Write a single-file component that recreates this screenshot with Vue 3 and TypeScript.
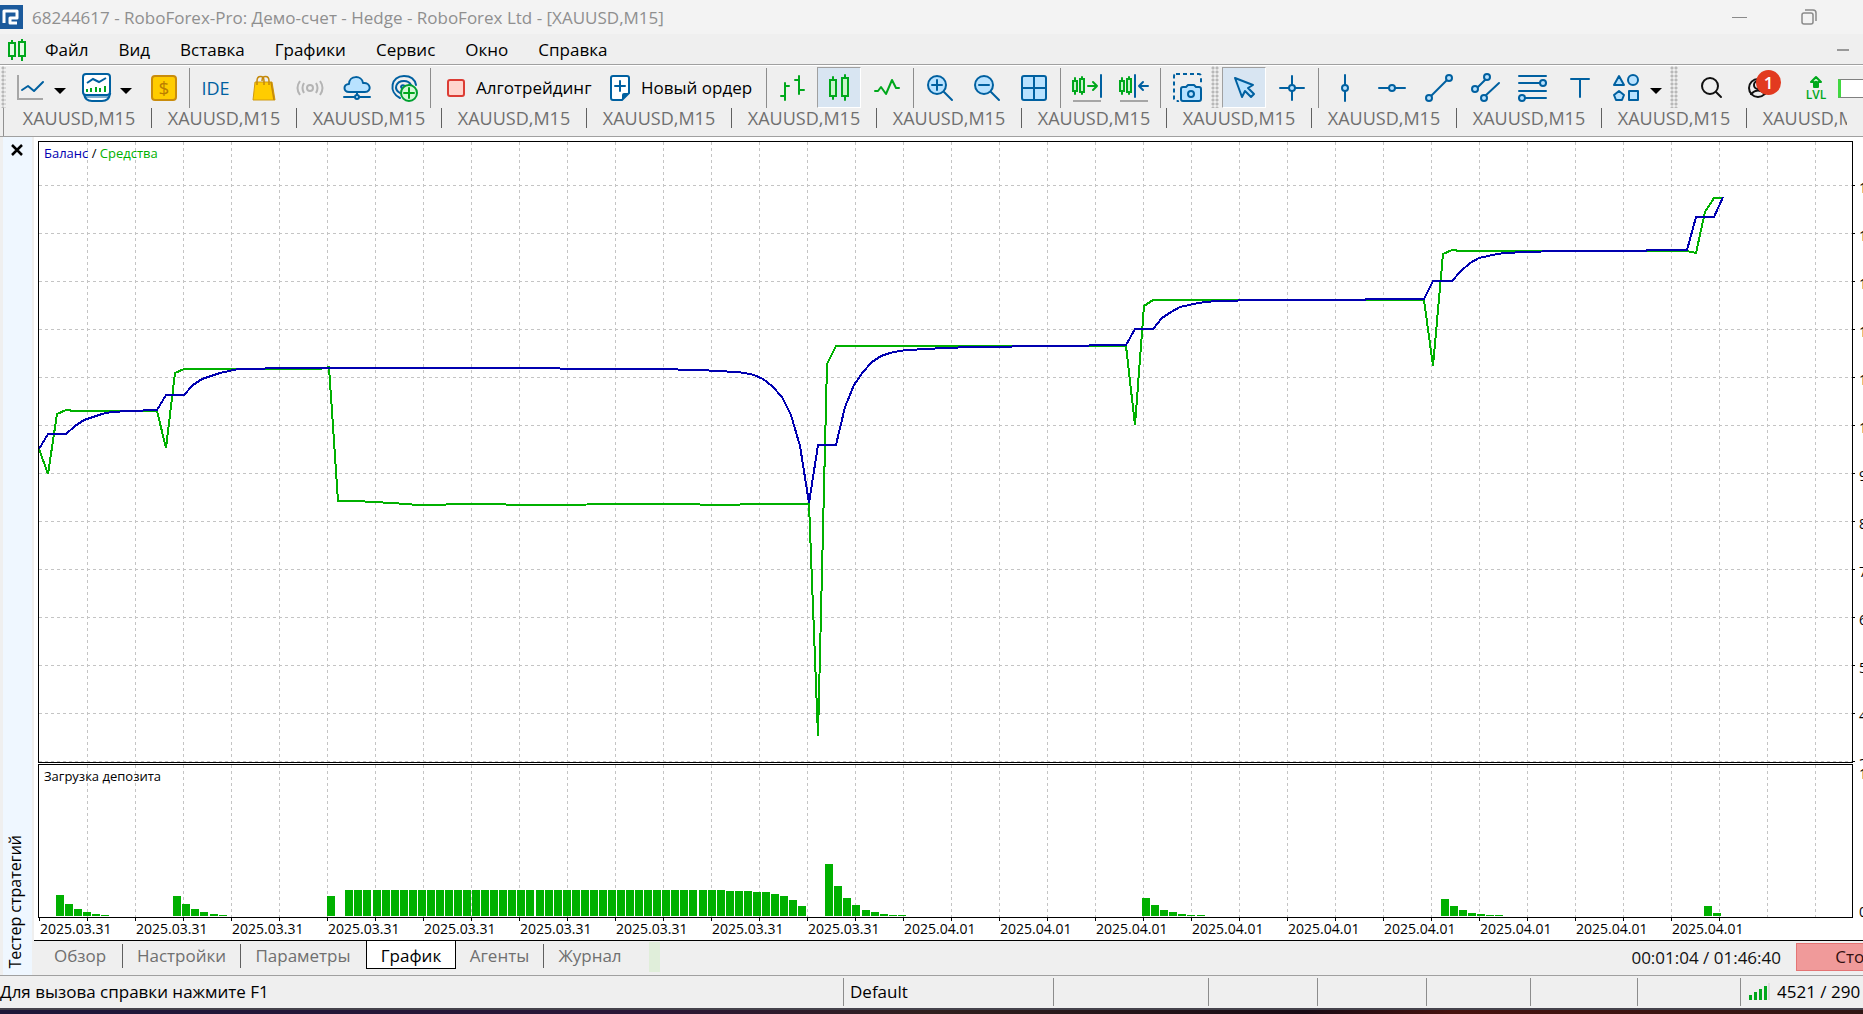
<script setup lang="ts">
type Point = [number, number]

interface Tool {
  kind: 'icon' | 'caret' | 'sep' | 'grip' | 'text'
  icon?: string
  label?: string
  active?: boolean
}

const B = 'fill="none" stroke="#0060a0" stroke-width="2" stroke-linecap="round" stroke-linejoin="round"'
const BF = 'fill="#b8e2ff" stroke="#0060a0" stroke-width="2" stroke-linejoin="round"'
const G = 'fill="none" stroke="#00a81c" stroke-width="2" stroke-linecap="round" stroke-linejoin="round"'
const GF = 'fill="#c8f5cc" stroke="#00a81c" stroke-width="2"'
const K = 'fill="none" stroke="#111" stroke-width="2" stroke-linecap="round"'

const icons: Record<string, string> = {
  line: `<path d="M3 3V27H28" fill="none" stroke="#a6a6a6" stroke-width="2"/><path d="M7 18L13 14L19 19L28 10" ${B}/>`,
  indicators: `<path d="M3 22C4 28 8 29 11 29H21C24 29 28 28 29 22Z" fill="#fff" stroke="#0060a0" stroke-width="2"/><path d="M4 25H28" stroke="#0060a0" stroke-width="1"/><rect x="2" y="2" width="27" height="21" rx="3" fill="#fff" stroke="#0060a0" stroke-width="2"/><path d="M6 11L12 7L18 10L25 6" fill="none" stroke="#0060a0" stroke-width="2"/><path d="M6 17V20M10 16V20M15 15V20M19 16V20M24 14V20" stroke="#00a81c" stroke-width="2"/>`,
  dollar: `<rect x="5" y="4" width="24" height="24" rx="3" fill="#ffcc00" stroke="#c98c0c" stroke-width="2"/><text x="17" y="23" text-anchor="middle" font-size="19" fill="#b97d00">$</text>`,
  bag: `<path d="M8 10H25L28 28H6Z" fill="#ffcc00" stroke="#d09a10" stroke-width="1"/><path d="M10 13V9C10 3 17 3 17 9V13M15 9C15 3 22 3 22 9V13M24 10L27 28" fill="none" stroke="#c4880a" stroke-width="1.5"/>`,
  signal: `<circle cx="16" cy="16" r="3" fill="none" stroke="#b4b4b4" stroke-width="2"/><path d="M10 11Q7 16 10 21M22 11Q25 16 22 21M6 9Q1 16 6 23M26 9Q31 16 26 23" fill="none" stroke="#b4b4b4" stroke-width="2"/>`,
  cloud: `<path d="M8 20C2 20 2 12 8 12C8 3 21 3 22 11C30 10 31 20 24 20Z" ${BF}/><path d="M16 20V23M3 25H13M19 25H29" ${B}/><circle cx="16" cy="25" r="2" ${BF}/>`,
  vps: `<path d="M12 26C0 20 3 4 16 4C23 4 27 8 28 13M12 21C5 17 8 9 16 9C20 9 22 11 23 13M15 17C11 15 14 12 17 14" ${B}/><circle cx="21" cy="21" r="8" fill="#d5f8d8" stroke="#00a030" stroke-width="2"/><path d="M16 21H26M21 16V26" ${G}/>`,
  algo: `<rect x="8" y="8" width="16" height="16" rx="2" fill="#ffd5ce" stroke="#dc3c34" stroke-width="2"/>`,
  order: `<path d="M9 4H23Q25 4 25 6V21L18 28H9Q7 28 7 26V6Q7 4 9 4Z" fill="#fff" stroke="#0060a0" stroke-width="2"/><path d="M25 21H20Q18 21 18 23V28Z" fill="#0060a0"/><path d="M11 14H21M16 9V19" ${B}/>`,
  bars: `<path d="M4 24H8M8 11V28M8 14H12M18 8H22M22 4V22M22 18H27" ${G}/>`,
  candles: `<path d="M10 5V27M22 3V28" ${G}/><rect x="7" y="8" width="6" height="16" ${GF}/><rect x="19" y="6" width="6" height="18" ${GF}/>`,
  zigzag: `<path d="M4 19H7L10 15L15 22L21 8L25 16H28" ${G}/>`,
  zoomin: `<circle cx="13" cy="13" r="9" ${BF}/><path d="M20 20L28 28M8 13H18M13 8V18" ${B}/>`,
  zoomout: `<circle cx="13" cy="13" r="9" ${BF}/><path d="M20 20L28 28M8 13H18" ${B}/>`,
  tile: `<rect x="4" y="4" width="24" height="24" rx="2" ${BF}/><path d="M16 4V28M4 16H28" ${B}/>`,
  shift: `<path d="M2 29H30" stroke="#a6a6a6" stroke-width="2"/><path d="M4 6V22M11 5V22" ${G}/><rect x="2" y="9" width="4" height="10" ${GF}/><rect x="9" y="7" width="4" height="13" ${GF}/><path d="M17 14H26M22 10L26 14L22 18" ${G}/><path d="M30 3V25" ${B}/>`,
  scroll: `<path d="M2 29H30" stroke="#a6a6a6" stroke-width="2"/><path d="M4 6V22M11 5V22" ${G}/><rect x="2" y="9" width="4" height="10" ${GF}/><rect x="9" y="7" width="4" height="13" ${GF}/><path d="M17 3V25M30 14H21M25 10L21 14L25 18" ${B}/>`,
  camera: `<rect x="3" y="2" width="27" height="27" rx="2" fill="none" stroke="#0060a0" stroke-width="2" stroke-dasharray="4 3"/><path d="M12 15H15L17 13H23L25 15H28Q30 15 30 17V27Q30 29 28 29H12Q10 29 10 27V17Q10 15 12 15Z" fill="#b8e2ff" stroke="#efefef" stroke-width="5"/><path d="M12 15H15L17 13H23L25 15H28Q30 15 30 17V27Q30 29 28 29H12Q10 29 10 27V17Q10 15 12 15Z" ${BF}/><circle cx="20" cy="22" r="3" ${BF}/>`,
  cursor: `<path d="M7 6L25 13L20 16L26 22L23 25L17 19L14 25Z" ${BF}/>`,
  cross: `<path d="M4 16H28M16 4V28" ${B}/><circle cx="16" cy="16" r="3" ${BF}/>`,
  vline: `<path d="M16 3V29" ${B}/><circle cx="16" cy="16" r="3" ${BF}/>`,
  hline: `<path d="M3 16H29" ${B}/><circle cx="16" cy="16" r="3" ${BF}/>`,
  trend: `<path d="M6 26L26 6" ${B}/><circle cx="26" cy="6" r="3" ${BF}/><circle cx="6" cy="26" r="3" ${BF}/>`,
  channel: `<path d="M6 17L17 6M14 25L29 11" ${B}/><circle cx="17" cy="5" r="3" ${BF}/><circle cx="5" cy="17" r="3" ${BF}/><circle cx="14" cy="26" r="3" ${BF}/>`,
  fibo: `<path d="M2 4H29M2 11H29M2 19H29M2 26H29" ${B}/><circle cx="26" cy="11" r="3" ${BF}/><circle cx="5" cy="26" r="3" ${BF}/>`,
  text: `<path d="M7 7H25M16 7V25" ${B}/>`,
  shapes: `<path d="M8 4L13 13H3Z" ${BF}/><circle cx="22" cy="8" r="5" ${BF}/><path d="M8 19L13 23L11 28H5L3 23Z" ${BF}/><rect x="18" y="19" width="9" height="9" ${BF}/>`,
  search: `<circle cx="16" cy="14" r="8" ${K}/><path d="M22 20L27 25" ${K}/>`,
  account: `<circle cx="14" cy="16" r="9" ${K}/><circle cx="14" cy="13" r="4" ${K}/><path d="M7 22Q14 15 21 22" ${K}/>`,
  level: `<path d="M16 16V9M16 5L11 10H14V15H18V10H21Z" fill="#c8f5cc" stroke="#00a81c" stroke-width="2" stroke-linejoin="round"/><text x="16" y="27" text-anchor="middle" font-size="12" font-weight="600" fill="#00a81c">LVL</text>`,
}

const icon = (name: string, label: string, active = false): Tool => ({ kind: 'icon', icon: name, label, active })
const sep: Tool = { kind: 'sep' }
const grip: Tool = { kind: 'grip' }
const caret: Tool = { kind: 'caret' }

const tools: Tool[] = [
  icon('line', 'Тип графика'), caret,
  icon('indicators', 'Индикаторы'), caret,
  icon('dollar', 'Символы'), sep,
  { kind: 'text', label: 'IDE' },
  icon('bag', 'Маркет'), icon('signal', 'Сигналы'), icon('cloud', 'Облако'), icon('vps', 'VPS'), sep,
]

const tools2: Tool[] = [
  sep, icon('bars', 'Бары'), icon('candles', 'Свечи', true), icon('zigzag', 'Линия'), sep,
  icon('zoomin', 'Увеличить'), icon('zoomout', 'Уменьшить'), icon('tile', 'Плитка'), sep,
  icon('shift', 'Автопрокрутка'), icon('scroll', 'Сдвиг'), sep,
  icon('camera', 'Снимок'), grip,
  icon('cursor', 'Курсор', true), icon('cross', 'Перекрестие'), sep,
  icon('vline', 'Вертикальная линия'), icon('hline', 'Горизонтальная линия'), icon('trend', 'Трендовая линия'),
  icon('channel', 'Канал'), icon('fibo', 'Фибоначчи'), icon('text', 'Текст'), icon('shapes', 'Фигуры'), caret, grip,
]

const menu = ['Файл', 'Вид', 'Вставка', 'Графики', 'Сервис', 'Окно', 'Справка']
const chartTabs = Array.from({ length: 13 }, () => 'XAUUSD,M15')

const STEP = 9.055
const GRID = 48

const balance: Point[] = [
  [0, 307], [1, 292], [3, 292], [4, 284], [5, 278], [6, 275], [7, 272], [8, 270], [10, 269], [13, 268],
  [14, 253], [16, 253], [17, 243], [18, 237], [19, 234], [20, 231], [21, 229], [22, 227], [24, 227], [26, 226],
  [55, 226], [60, 227], [68, 227], [73, 228], [75, 229], [77, 230], [78, 231], [79, 233], [80, 237], [81, 244],
  [82, 255], [83, 273], [84, 304], [85, 361], [86, 303], [88, 303], [89, 265], [90, 243], [91, 230], [92, 220],
  [93, 214], [94, 211], [95, 209], [96, 208], [98, 207], [100, 206], [103, 205], [112, 204], [120, 203],
  [121, 187], [123, 187], [124, 176], [125, 170], [126, 165], [127, 163], [128, 161], [129, 160], [130, 159],
  [135, 158], [146, 158], [147, 157], [153, 157], [154, 139], [156, 139], [157, 129], [158, 121], [159, 116], [160, 114],
  [161, 112], [162, 111], [164, 110], [168, 109], [177, 109], [178, 108], [182, 108], [183, 75], [185, 75], [186, 55],
]

const equity: Point[] = [
  [0, 307], [1, 332], [2, 272], [3, 268], [4, 269], [13, 269], [14, 306], [15, 231], [16, 227], [31, 227],
  [32, 225], [33, 359], [35, 359], [37, 360], [39, 361], [42, 363], [48, 362], [55, 363], [66, 362], [72, 362],
  [74, 363], [81, 362], [85, 362], [86, 594], [87, 222], [88, 204], [120, 204], [121, 283], [122, 164], [123, 158],
  [153, 158], [154, 224], [155, 112], [156, 108], [157, 109], [182, 109], [183, 111], [184, 70], [185, 56], [186, 56],
]

const toPoints = (data: Point[]): string => data.map(([n, y]) => `${Math.round(n * STEP)},${y}`).join(' ')

const plateau: Point[] = Array.from({ length: 42 }, (_, i): Point => [34 + i, 26])
const load: Point[] = [
  [2, 21], [3, 12], [4, 7], [5, 4], [6, 2], [7, 1],
  [15, 20], [16, 12], [17, 7], [18, 4], [19, 2], [20, 1],
  [32, 20], ...plateau,
  [76, 25], [77, 25], [78, 25], [79, 24], [80, 24], [81, 22], [82, 20], [83, 16], [84, 10],
  [87, 52], [88, 30], [89, 18], [90, 11], [91, 6], [92, 4], [93, 2], [94, 1], [95, 1],
  [122, 18], [123, 11], [124, 6], [125, 4], [126, 2], [127, 1], [128, 1],
  [155, 17], [156, 10], [157, 6], [158, 3], [159, 2], [160, 1], [161, 1],
  [184, 10], [185, 3],
]
const barX = (n: number): number => Math.floor(n * STEP) - 1

const dates = Array.from({ length: 18 }, (_, i) => (i < 9 ? '2025.03.31' : '2025.04.01'))
const scale = ['1', '1', '1', '1', '1', '1', '9', '8', '7', '6', '5', '4', '3']
const signalBars = [5, 8, 11, 14]
</script>

<template>
  <div class="window">
    <header class="title">
      <svg class="logo" width="23" height="24" viewBox="0 0 23 24" aria-hidden="true">
        <rect width="23" height="24" fill="#1b5a9c" />
        <path d="M4 18V6H17V13H10V18H17" fill="none" stroke="#fff" stroke-width="3" stroke-linejoin="round" />
      </svg>
      <span class="caption">68244617 - RoboForex-Pro: Демо-счет - Hedge - RoboForex Ltd - [XAUUSD,M15]</span>
      <button class="plain" aria-label="Свернуть">
        <svg width="16" height="16"><path d="M0 8.5H15" stroke="#8a8a8a" /></svg>
      </button>
      <button class="plain restore" aria-label="Восстановить">
        <svg width="16" height="16" fill="none" stroke="#8a8a8a">
          <rect x="1" y="4" width="11" height="11" rx="2" stroke-width="1.5" />
          <path d="M4 1H12Q15 1 15 4V12" stroke-width="1.5" />
        </svg>
      </button>
    </header>

    <nav class="menu">
      <svg class="appicon" width="18" height="24" fill="none" stroke="#00a81c" stroke-width="2" aria-hidden="true">
        <path d="M4 2V22M14 1V23" />
        <rect x="1" y="5" width="6" height="13" fill="#e2fbe4" />
        <rect x="11" y="4" width="6" height="14" fill="#e2fbe4" />
      </svg>
      <button v-for="m in menu" :key="m" class="plain">{{ m }}</button>
      <button class="plain mdi" aria-label="Свернуть график">
        <svg width="12" height="12"><path d="M0 6H12" stroke="#999" stroke-width="2" /></svg>
      </button>
    </nav>

    <div class="toolbar">
      <span class="grip first"></span>
      <template v-for="(t, i) in tools" :key="i">
        <span v-if="t.kind === 'sep'" class="sep"></span>
        <button v-else-if="t.kind === 'caret'" class="caret" aria-label="Список"><i></i></button>
        <button v-else-if="t.kind === 'text'" class="tool ide">{{ t.label }}</button>
        <button v-else class="tool" :aria-label="t.label">
          <svg width="32" height="32" v-html="icons[t.icon ?? '']"></svg>
        </button>
      </template>
      <button class="wide algo"><svg width="32" height="32" v-html="icons.algo"></svg><span>Алготрейдинг</span></button>
      <button class="wide order"><svg width="32" height="32" v-html="icons.order"></svg><span>Новый ордер</span></button>
      <template v-for="(t, i) in tools2" :key="i">
        <span v-if="t.kind === 'sep'" class="sep"></span>
        <span v-else-if="t.kind === 'grip'" class="grip"></span>
        <button v-else-if="t.kind === 'caret'" class="caret" aria-label="Список"><i></i></button>
        <button v-else class="tool" :class="{ active: t.active }" :aria-label="t.label">
          <svg width="32" height="32" v-html="icons[t.icon ?? '']"></svg>
        </button>
      </template>
      <button class="tool search" aria-label="Поиск"><svg width="32" height="32" v-html="icons.search"></svg></button>
      <button class="tool account" aria-label="Аккаунт">
        <svg width="32" height="32" v-html="icons.account"></svg>
        <span class="badge">1</span>
      </button>
      <button class="tool level" aria-label="Уровень"><svg width="32" height="32" v-html="icons.level"></svg></button>
      <span class="meter"></span>
    </div>

    <div class="charttabs">
      <button v-for="(t, i) in chartTabs" :key="i">{{ t }}</button>
    </div>

    <main class="tester">
      <aside>
        <button class="plain" aria-label="Закрыть">
          <svg width="14" height="14"><path d="M2 2L12 12M12 2L2 12" stroke="#000" stroke-width="2.5" /></svg>
        </button>
        <span class="vertical">Тестер стратегий</span>
      </aside>

      <section class="content">
        <div class="charts">
          <div class="row grow">
            <div class="pane">
              <svg class="plot" width="100%" height="100%" shape-rendering="crispEdges">
                <defs>
                  <pattern id="vgrid" x="0" y="0" :width="GRID" height="6" patternUnits="userSpaceOnUse">
                    <rect x="47" y="0" width="1" height="3" fill="#c4c4c4" />
                  </pattern>
                  <pattern id="hgrid" x="0" y="43" width="6" :height="GRID" patternUnits="userSpaceOnUse">
                    <rect x="0" y="0" width="3" height="1" fill="#c4c4c4" />
                  </pattern>
                </defs>
                <g transform="translate(1)"><rect width="100%" height="100%" fill="url(#vgrid)" /></g>
                <rect width="100%" height="100%" fill="url(#hgrid)" />
                <polyline :points="toPoints(equity)" fill="none" stroke="#00b000" stroke-width="2" />
                <polyline :points="toPoints(balance)" fill="none" stroke="#0000b0" stroke-width="2" />
              </svg>
              <p class="legend"><span class="bal">Баланс</span> / <span class="eq">Средства</span></p>
            </div>
            <div class="scale">
              <span v-for="(s, i) in scale" :key="i">{{ s }}</span>
            </div>
          </div>
          <div class="row">
            <div class="pane load">
              <svg class="plot" width="100%" height="100%" shape-rendering="crispEdges">
                <g transform="translate(1)"><rect width="100%" height="100%" fill="url(#vgrid)" /></g>
                <rect v-for="[n, h] in load" :key="n" :x="barX(n)" :y="151 - h" width="8" :height="h" fill="#00b000" />
              </svg>
              <p class="legend">Загрузка депозита</p>
            </div>
            <div class="scale small"><span>1</span><span>0</span></div>
          </div>
          <div class="dates">
            <span v-for="(d, i) in dates" :key="i">{{ d }}</span>
          </div>
        </div>

        <div class="tabs">
          <button class="w85">Обзор</button>
          <button class="w118">Настройки</button>
          <button class="w125 last">Параметры</button>
          <button class="w90 current">График</button>
          <button class="w88">Агенты</button>
          <button class="w93 last">Журнал</button>
          <span class="progress"></span>
          <span class="time">00:01:04 / 01:46:40</span>
          <button class="stop">Стоп</button>
        </div>
      </section>
    </main>

    <footer class="status">
      <span class="hint">Для вызова справки нажмите F1</span>
      <span class="w210">Default</span>
      <span class="w155"></span>
      <span class="w109"></span>
      <span class="w109"></span>
      <span class="w104"></span>
      <span class="w107"></span>
      <span class="w103"></span>
      <span class="net">
        <svg width="22" height="20" aria-hidden="true">
          <rect v-for="(h, i) in signalBars" :key="i" :x="i * 5" :y="18 - h" width="3" :height="h" fill="#00a81c" />
          <rect x="19" y="1" width="2" height="17" fill="#ddd" />
        </svg>
        4521 / 290
      </span>
    </footer>
    <div class="desk"></div>
  </div>
</template>

<style>
body {
  margin: 0;
  overflow: hidden;
}
</style>

<style scoped>
.window {
  height: 100vh;
  display: flex;
  flex-direction: column;
  overflow: hidden;
  background: #efefef;
  color: #000;
  font: 17px/24px "Open Sans", "Noto Sans", sans-serif;
}
button {
  font: inherit;
  color: inherit;
  background: none;
  border: 0;
  padding: 0;
  margin: 0;
  white-space: nowrap;
  flex: none;
}
svg {
  flex: none;
  display: block;
}
.title {
  flex: none;
  height: 34px;
  display: flex;
  align-items: center;
  background: #f3f3f3;
  color: #8f8f8f;
}
.caption {
  flex: 1;
  margin-left: 9px;
  padding-top: 1px;
}
.restore {
  margin: 0 46px 0 53px;
}
.menu {
  flex: none;
  height: 28px;
  padding-top: 2px;
  display: flex;
  align-items: center;
  gap: 30px;
  border-bottom: 1px solid #a0a0a0;
}
.appicon {
  margin: 0 -11px 0 8px;
}
.mdi {
  margin: 0 14px 0 auto;
}
.toolbar {
  flex: none;
  height: 42px;
  border-top: 1px solid #fff;
  display: flex;
  align-items: stretch;
  overflow: hidden;
}
.tool,
.wide {
  box-sizing: border-box;
  padding-top: 2px;
  display: flex;
  align-items: center;
}
.tool {
  width: 47px;
  justify-content: center;
}
.tool.active {
  width: 44px;
  margin: 1px 2px 0 1px;
  padding-top: 1px;
  background: #d8e5f2;
  border: 1px solid #a0a0a0;
  border-right-color: #fff;
  border-bottom-color: #fff;
}
.ide {
  color: #0060a0;
  font-size: 18px;
}
.caret {
  width: 12px;
  margin-right: 7px;
  padding-top: 2px;
  display: flex;
  align-items: center;
}
.caret i {
  margin-top: 5px;
  border: 6px solid transparent;
  border-top-color: #000;
  border-bottom: 0;
}
.sep {
  flex: none;
  width: 1px;
  margin: 2px 2px 0 3px;
  background: #8c8c8c;
}
.grip {
  flex: none;
  width: 8px;
  margin: 0 2px 0 1px;
  background: radial-gradient(circle, #b8b8b8 1px, transparent 2px) 0 0 / 4px 4px;
}
.grip.first {
  width: 5px;
  margin: 0 1px;
}
.algo {
  width: 164px;
  gap: 4px;
  padding-left: 7px;
}
.order {
  width: 166px;
  gap: 5px;
  padding-left: 7px;
}
.search {
  width: 60px;
}
.account {
  width: 40px;
  position: relative;
}
.badge {
  position: absolute;
  left: 16px;
  top: 4px;
  width: 25px;
  height: 25px;
  border-radius: 50%;
  background: #e23a20;
  color: #fff;
  font: 600 17px/25px "Open Sans", sans-serif;
}
.level {
  width: 44px;
  margin-left: 14px;
}
.meter {
  flex: none;
  align-self: center;
  width: 60px;
  height: 17px;
  margin-top: 2px;
  border: 1px solid #808080;
  border-left: 3px solid #40d840;
  background: #fff;
}
.charttabs {
  flex: none;
  height: 28px;
  display: flex;
  overflow-x: clip;
  margin: 0 16px 0 3px;
  border-left: 1px solid #909090;
  padding-left: 3px;
  color: #707070;
}
.charttabs button {
  width: 145px;
  height: 20px;
  font-size: 18px;
  line-height: 20px;
  border-right: 1px solid #606060;
  box-sizing: border-box;
}
.tester {
  flex: 1;
  min-height: 0;
  display: flex;
  border-top: 1px solid #a0a0a0;
  padding-left: 3px;
}
aside {
  flex: none;
  width: 29px;
  margin-right: 2px;
  background: #eff7ff;
  display: flex;
  flex-direction: column;
  align-items: center;
  justify-content: space-between;
  padding: 6px 2px 6px 0;
  box-sizing: border-box;
}
.vertical {
  writing-mode: vertical-rl;
  transform: rotate(180deg);
  margin-right: 3px;
  font-size: 16px;
}
.content {
  flex: 1;
  min-width: 0;
  display: flex;
  flex-direction: column;
}
.charts {
  flex: 1;
  min-height: 0;
  display: flex;
  flex-direction: column;
  gap: 1px;
  padding: 4px 0 0 4px;
  background: #fff;
  font-size: 14px;
  line-height: 20px;
}
.row {
  display: flex;
}
.grow {
  flex: 1;
  min-height: 0;
}
.pane {
  flex: 1;
  min-width: 0;
  border: 1px solid #000;
  position: relative;
}
.load {
  height: 152px;
}
.plot {
  position: absolute;
  inset: 0;
}
.legend {
  position: absolute;
  left: 5px;
  top: 1px;
  margin: 0;
  font-size: 13px;
}
.bal {
  color: #0000b0;
}
.eq {
  color: #00b000;
}
.scale {
  flex: none;
  width: 10px;
  box-sizing: border-box;
  padding: 22px 0 0 6px;
  overflow: hidden;
  line-height: 50px;
  background: linear-gradient(#000 1px, transparent 1px) 0 44px / 2px 48px repeat-y;
}
.scale span {
  display: block;
  height: 48px;
}
.small {
  display: flex;
  flex-direction: column;
  justify-content: space-between;
  padding-top: 0;
  line-height: 20px;
  overflow: visible;
  background: none;
}
.small span {
  height: 16px;
}
.dates {
  height: 22px;
  margin-top: -1px;
  display: flex;
  overflow: hidden;
}
.dates span {
  flex: none;
  width: 96px;
  box-sizing: border-box;
  padding: 1px 0 0 2px;
  background:
    linear-gradient(#000, #000) 1px 0 / 1px 3px no-repeat,
    linear-gradient(#000, #000) 49px 0 / 1px 3px no-repeat;
}
.tabs {
  flex: none;
  height: 34px;
  display: flex;
  align-items: flex-start;
  border-top: 1px solid #000;
  padding-left: 4px;
  color: #707070;
  overflow: hidden;
}
.tabs button {
  height: 24px;
  margin-top: 3px;
  line-height: 22px;
  border-right: 1px solid #606060;
  box-sizing: border-box;
}
.tabs .last {
  border-right-color: transparent;
}
.tabs .current {
  height: 29px;
  margin-top: -1px;
  padding-top: 2px;
  border: 1px solid #000;
  border-top-color: #fff;
  background: #fff;
  color: #000;
}
.w85 { width: 85px; }
.w118 { width: 118px; }
.w125 { width: 125px; }
.w90 { width: 90px; }
.w88 { width: 88px; }
.w93 { width: 93px; }
.progress {
  flex: none;
  width: 11px;
  height: 30px;
  margin: 1px 0 0 12px;
  background: #e0eeda;
}
.time {
  margin: 5px 15px 0 auto;
  color: #111;
}
.tabs .stop {
  width: 118px;
  height: 28px;
  margin: 2px -51px 0 0;
  border: 1px solid #e47474;
  background: #f09a9a;
  color: #301010;
}
.status {
  flex: none;
  height: 32px;
  display: flex;
  align-items: center;
  overflow: hidden;
  border-top: 1px solid #a0a0a0;
  white-space: nowrap;
}
.status span {
  flex: none;
  height: 28px;
  line-height: 28px;
  box-sizing: border-box;
  border-left: 1px solid #8c8c8c;
  padding-left: 6px;
}
.status .hint {
  flex: 1;
  border: 0;
  padding: 0;
}
.w210 { width: 210px; }
.w155 { width: 155px; }
.w109 { width: 109px; }
.w104 { width: 104px; }
.w107 { width: 107px; }
.w103 { width: 103px; }
.status .net {
  width: 123px;
  display: flex;
  align-items: center;
  gap: 6px;
  padding-left: 8px;
}
.desk {
  flex: none;
  height: 4px;
  border-top: 2px solid #45424c;
  background: linear-gradient(90deg, #1c1638, #2a1636 35%, #30201e 50%, #180a14 70%, #46120e 78%, #301614);
}
</style>
